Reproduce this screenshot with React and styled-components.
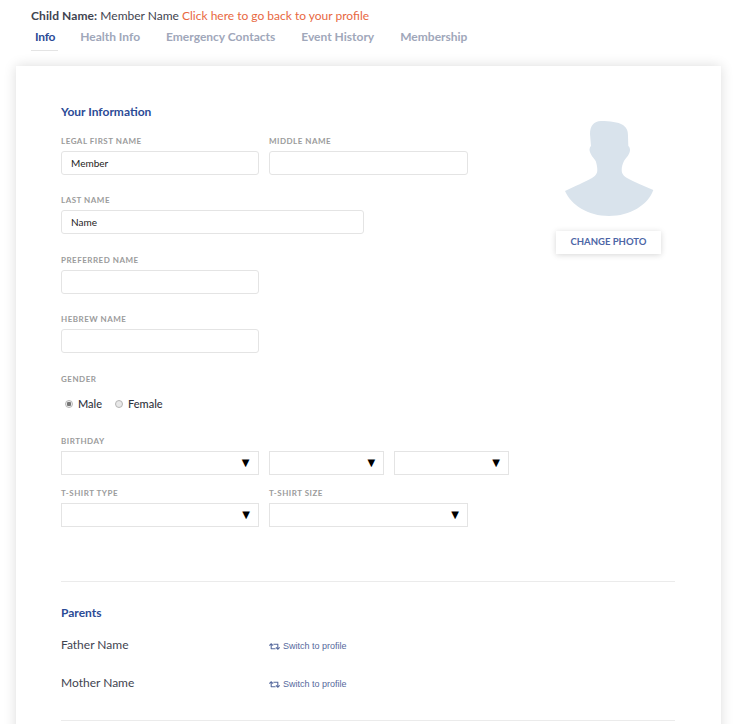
import styled, { createGlobalStyle } from 'styled-components';
import { FaRetweet } from 'react-icons/fa';

const GlobalStyle = createGlobalStyle`
	html, body {
		margin: 0;
		height: 724px;
		overflow: hidden;
		background: #fff;
		font-family: 'Lato', 'Liberation Sans', sans-serif;
	}
`;

const Page = styled.div`
	width: 740px;
	height: 724px;
	overflow: hidden;
`;

const ChildHeader = styled.div`
	height: 28px;
	padding: 8px 0 0 31px;
	box-sizing: border-box;

	font-size: 12px;
	line-height: 16px;
	color: #3f4450;
`;

const ChildLabel = styled.b`
	font-weight: 700;
	letter-spacing: 0.1px;
`;

const BackLink = styled.a`
	color: #e8683f;
`;

const Tabs = styled.nav`
	display: flex;
	gap: 18px;
	padding-left: 31px;
`;

const Tab = styled.div`
	padding: ${(props) => (props.$active ? '0 3px 5px 4px' : '0 4px 5px')};

	font-size: 12px;
	font-weight: 700;
	letter-spacing: ${(props) => (props.$active ? '-0.25px' : '0')};
	line-height: 17px;
	color: ${(props) => (props.$active ? '#2b4b96' : '#a0a7ba')};
	border-bottom: 1px solid ${(props) => (props.$active ? '#e4e4e4' : 'transparent')};
`;

const Card = styled.section`
	width: 705px;
	margin: 15px 0 0 16px;
	padding: 38px 46px 40px 45px;
	box-sizing: border-box;

	background: #fff;
	box-shadow: 0 0 12px rgba(0, 0, 0, 0.14);
`;

const InfoSection = styled.div`
	display: flex;
	justify-content: space-between;
	min-height: 477px;
`;

const FormColumn = styled.div`
	width: 448px;
`;

const SectionTitle = styled.h2`
	margin: 0 0 16px;

	font-size: 12px;
	font-weight: 700;
	line-height: 16px;
	color: #2b4b96;
`;

const Row = styled.div`
	display: flex;
	gap: ${(props) => props.$gap || 10}px;
	margin-bottom: ${(props) => props.$bottom ?? 20}px;
`;

const Field = styled.label`
	display: block;
	width: ${(props) => props.$width}px;
`;

const FieldLabel = styled.div`
	margin-bottom: 4px;

	font-size: 8px;
	font-weight: 700;
	letter-spacing: 0.5px;
	line-height: 11px;
	color: #9b9b9b;
`;

const TextInput = styled.input`
	display: block;
	width: 100%;
	height: 24px;
	padding: 0 9px 1px;
	box-sizing: border-box;

	font-family: 'Lato', sans-serif;
	font-size: 10px;
	color: #222;
	background: #fff;
	border: 1px solid #e4e4e4;
	border-radius: 3px;
	outline: none;
`;

const SelectBox = styled.div`
	display: flex;
	justify-content: flex-end;
	align-items: center;
	height: 24px;
	padding-right: 8px;
	box-sizing: border-box;

	background: #fff;
	border: 1px solid #e4e4e4;
`;

const Arrow = styled.span`
	font-family: 'DejaVu Sans', sans-serif;
	font-size: 10px;
	line-height: 1;
	color: #000;
`;

const RadioRow = styled.div`
	display: flex;
	align-items: center;
	gap: 13px;
	height: 16px;
	padding-left: 4px;
	margin: 10px 0 25px;
`;

const RadioLabel = styled.label`
	display: flex;
	align-items: center;
	gap: 5px;

	font-size: 11px;
	font-weight: 500;
	color: #2f3440;
`;

const Radio = styled.input.attrs({ type: 'radio', name: 'gender' })`
	appearance: none;
	width: 8px;
	height: 8px;
	margin: 2px 0 0;
	box-sizing: border-box;

	border: 1px solid #b5b5b5;
	border-radius: 50%;
	background: #e8e8e8;

	&:checked {
		background: radial-gradient(circle, #777 0 2px, #f0f0f0 2.5px);
	}
`;

const PhotoColumn = styled.div`
	display: flex;
	flex-direction: column;
	align-items: center;
	gap: 15px;
	width: 105px;
	margin: 16px 14px 0 0;
`;

const PhotoButton = styled.button`
	width: 105px;
	height: 23px;
	padding: 0 0 2px;

	font-family: inherit;
	font-size: 9.5px;
	font-weight: 700;
	color: #4d66a6;
	background: #fff;
	border: 0;
	box-shadow: 0 1px 6px rgba(0, 0, 0, 0.16);
`;

const Divider = styled.hr`
	margin: 0;
	border: 0;
	border-top: 1px solid #ebebeb;
`;

const ParentsSection = styled.div`
	padding: 23px 0 27px;
`;

const ParentRow = styled.div`
	display: flex;
	align-items: center;
	height: 18px;
	margin-bottom: 20px;

	&:last-child {
		margin-bottom: 0;
	}
`;

const ParentName = styled.div`
	width: 208px;
	margin-bottom: 4px;

	font-size: 12px;
	color: #3f4450;
`;

const SwitchLink = styled.a`
	display: flex;
	align-items: center;
	gap: 3px;

	font-family: 'Liberation Sans', sans-serif;
	font-size: 9px;
	color: #56699d;
`;

const Avatar = () => (
	<svg width="90" height="96" viewBox="0 0 90 96">
		<path
			fill="#d9e3ec"
			d="M26 14 C26 6 30 1 37 1 C46 1 54 2 59 5 C63 8 64 11 64 16 L64.3 26 C65.5 27 66 28.5 66 30 C66 34 62 38 60 41 C58.5 44 57.7 47 57.7 50 C57.7 54 60 56 63 58 C70 62 80 66 89.3 70 C84 85 66 96 45 96 C24 96 7 85 1 71 C11 66 21 62 28 58 C31 56 33.3 54 33.3 50 C33.3 47 32.7 44 31.7 41 C29.5 38 26 34 25.5 30 C25.5 28.5 26 27 27 26 Z"
		/>
	</svg>
);

const Select = ({ width }) => (
	<Field $width={width}>
		<SelectBox>
			<Arrow>▼</Arrow>
		</SelectBox>
	</Field>
);

const App = () => {
	return (
		<Page>
			<GlobalStyle />
			<ChildHeader>
				<ChildLabel>Child Name:</ChildLabel> Member Name{' '}
				<BackLink>Click here to go back to your profile</BackLink>
			</ChildHeader>
			<Tabs>
				<Tab $active>Info</Tab>
				<Tab>Health Info</Tab>
				<Tab>Emergency Contacts</Tab>
				<Tab>Event History</Tab>
				<Tab>Membership</Tab>
			</Tabs>
			<Card>
				<InfoSection>
					<FormColumn>
						<SectionTitle>Your Information</SectionTitle>
						<Row>
							<Field $width={198}>
								<FieldLabel>LEGAL FIRST NAME</FieldLabel>
								<TextInput defaultValue="Member" />
							</Field>
							<Field $width={199}>
								<FieldLabel>MIDDLE NAME</FieldLabel>
								<TextInput />
							</Field>
						</Row>
						<Row $bottom={21}>
							<Field $width={303}>
								<FieldLabel>LAST NAME</FieldLabel>
								<TextInput defaultValue="Name" />
							</Field>
						</Row>
						<Row>
							<Field $width={198}>
								<FieldLabel>PREFERRED NAME</FieldLabel>
								<TextInput />
							</Field>
						</Row>
						<Row $bottom={21}>
							<Field $width={198}>
								<FieldLabel>HEBREW NAME</FieldLabel>
								<TextInput />
							</Field>
						</Row>
						<FieldLabel>GENDER</FieldLabel>
						<RadioRow>
							<RadioLabel>
								<Radio defaultChecked />
								Male
							</RadioLabel>
							<RadioLabel>
								<Radio />
								Female
							</RadioLabel>
						</RadioRow>
						<FieldLabel>BIRTHDAY</FieldLabel>
						<Row $bottom={13}>
							<Select width={198} />
							<Select width={116} />
							<Select width={115} />
						</Row>
						<Row $bottom={0}>
							<Field $width={198}>
								<FieldLabel>T-SHIRT TYPE</FieldLabel>
								<Select />
							</Field>
							<Field $width={199}>
								<FieldLabel>T-SHIRT SIZE</FieldLabel>
								<Select />
							</Field>
						</Row>
					</FormColumn>
					<PhotoColumn>
						<Avatar />
						<PhotoButton>CHANGE PHOTO</PhotoButton>
					</PhotoColumn>
				</InfoSection>
				<Divider />
				<ParentsSection>
					<SectionTitle>Parents</SectionTitle>
					<ParentRow>
						<ParentName>Father Name</ParentName>
						<SwitchLink>
							<FaRetweet size={11} />
							Switch to profile
						</SwitchLink>
					</ParentRow>
					<ParentRow>
						<ParentName>Mother Name</ParentName>
						<SwitchLink>
							<FaRetweet size={11} />
							Switch to profile
						</SwitchLink>
					</ParentRow>
				</ParentsSection>
				<Divider />
			</Card>
		</Page>
	);
};

export default App;
